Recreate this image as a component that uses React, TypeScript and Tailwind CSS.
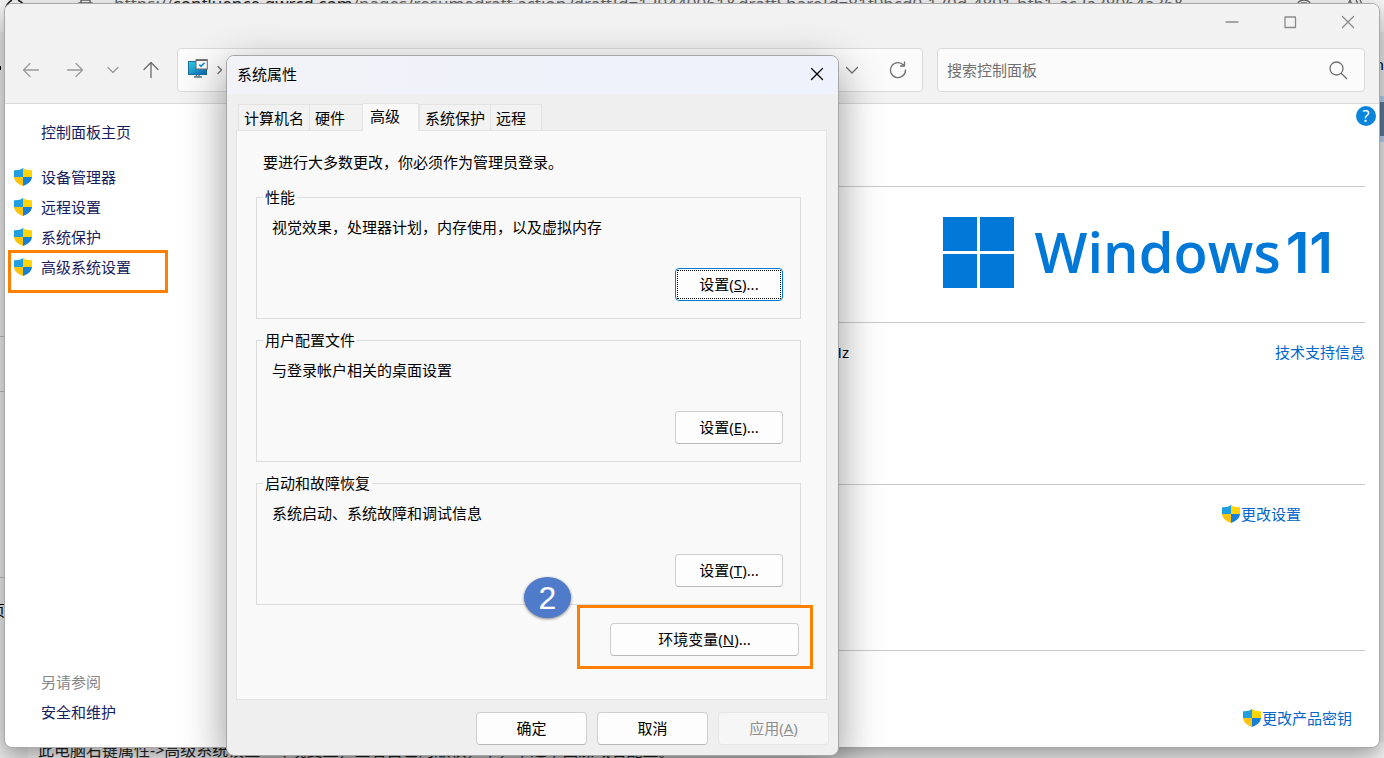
import { useId, type ReactNode } from 'react'
import clsx from 'clsx'

const sideLinks = [
  { t: '设备管理器' },
  { t: '远程设置' },
  { t: '系统保护' },
  { t: '高级系统设置', marked: true },
]

const tabs = [
  { t: '计算机名', w: 'w-[71px]' },
  { t: '硬件', w: 'w-[53px]' },
  { t: '高级', w: 'w-[57px]', active: true },
  { t: '系统保护', w: 'w-[71px]' },
  { t: '远程', w: 'w-[52px]' },
]

const groups = [
  { t: '性能', d: '视觉效果，处理器计划，内存使用，以及虚拟内存', k: 'S', focused: true },
  { t: '用户配置文件', d: '与登录帐户相关的桌面设置', k: 'E' },
  { t: '启动和故障恢复', d: '系统启动、系统故障和调试信息', k: 'T' },
]

function Shield() {
  const id = useId()
  return (
    <svg className="size-[18px] shrink-0" viewBox="0 0 18 18" aria-hidden="true">
      <clipPath id={id}>
        <path d="M9 0C11.2 1.7 14 2.4 18 2.2V8.6C18 13.4 13.6 16.6 9 18C4.4 16.6 0 13.4 0 8.6V2.2C4 2.4 6.8 1.7 9 0Z" />
      </clipPath>
      <g clipPath={`url(#${id})`}>
        <rect width="9" height="9" fill="#1f9fe0" />
        <rect x="9" width="9" height="9" fill="#ffd400" />
        <rect y="9" width="9" height="9" fill="#fcc30d" />
        <rect x="9" y="9" width="9" height="9" fill="#1580d6" />
      </g>
    </svg>
  )
}

function Glyph({ d, size = 'size-4', box = 16 }: { d: string; size?: string; box?: number }) {
  return (
    <svg className={size} viewBox={`0 0 ${box} ${box}`} fill="none" stroke="currentColor" strokeWidth="1.3"
      strokeLinecap="round" strokeLinejoin="round" aria-hidden="true">
      <path d={d} />
    </svg>
  )
}

function ComputerIcon() {
  return (
    <svg className="mb-1 h-[19px] w-5 shrink-0" viewBox="0 0 20 19" aria-hidden="true">
      <defs>
        <linearGradient id="screen" x1="0" y1="0" x2="1" y2="1">
          <stop offset="0" stopColor="#2fd3e3" />
          <stop offset="1" stopColor="#0b62b8" />
        </linearGradient>
      </defs>
      <rect x="0.5" y="2.5" width="18" height="13" fill="url(#screen)" stroke="#1a6f9c" />
      <path d="M8.5 16v1.5M11 16v1.5M6 18h8" stroke="#5b7688" strokeWidth="1.4" />
      <rect x="8" y="0.7" width="11.3" height="9.3" fill="#fff" stroke="#6a6a6a" />
      <path d="M8 1.2h11.3" stroke="#6a6a6a" strokeWidth="1.4" />
      <path d="M11.3 5.6l1.8 1.8 3.4-3.7" stroke="#1687e0" strokeWidth="1.6" fill="none" />
    </svg>
  )
}

function PushButton({ children, className, focused, disabled }: {
  children: ReactNode; className?: string; focused?: boolean; disabled?: boolean
}) {
  return (
    <button type="button" disabled={disabled}
      className={clsx('h-[33px] rounded border p-px text-center',
        focused ? 'border-[#0078d4] bg-[#fdfdfd]'
          : disabled ? 'border-[#e6e6e6] bg-[#f6f6f6] text-[#8f8f8f]'
          : 'border-[#cfcfcf] border-b-[#b9b9b9] bg-[#fdfdfd]',
        className)}>
      <span className={clsx('flex h-full items-center justify-center border pb-0.5', focused ? 'border-dotted border-black' : 'border-transparent')}>
        <span>{children}</span>
      </span>
    </button>
  )
}

function Backdrop() {
  return (
    <div className="absolute inset-0 overflow-hidden bg-[#ededed]" aria-hidden="true">
      <div className="absolute inset-x-0 top-0 h-8 bg-[#f7f7f7]" />
      <svg className="absolute left-1 top-0 h-6 w-7" viewBox="0 0 28 24" fill="none" stroke="#222" strokeWidth="1.6">
        <path d="M2 8Q3 3 8 0M14 0Q18 2 20 5" />
      </svg>
      <svg className="absolute left-[78px] top-0 h-6 w-4" viewBox="0 0 16 24" fill="none" stroke="#666" strokeWidth="1.4">
        <path d="M3 4V0h9v4M1 14V3h13v11" />
      </svg>
      <p className="absolute left-[114px] -top-2 whitespace-nowrap text-[17px] leading-6 text-[#666]">
        https://<span className="text-[#222]">confluence.gwrcd.com</span>/pages/resumedraft.action?draftId=129449061&amp;draftShareId=81f9bcd0-170d-4891-bfb1-ac2a38064a36&amp;
      </p>
      <svg className="absolute right-[70px] top-0 h-5 w-5" viewBox="0 0 20 20" fill="none" stroke="#666" strokeWidth="1.3">
        <circle cx="10" cy="8" r="8" />
        <path d="M7 3h6" />
      </svg>
      <svg className="absolute right-[18px] top-0 h-5 w-6" viewBox="0 0 24 20" fill="none" stroke="#666" strokeWidth="1.3">
        <path d="M3 12L8 0l5 12M14 0q3 4 2 10M18 0q3 5 2 10" />
      </svg>
      <div className="absolute left-0 top-[66px] h-1 w-px bg-black" />
      <div className="absolute right-0 top-[54px] text-[15px] leading-5 text-black">n</div>
      <div className="absolute right-0 top-24 h-[46px] w-3 border-y-[6px] border-[#b8d2ef] bg-[#5f7a99]" />
      <div className="absolute left-0 top-[336px] h-14 w-5 border-y border-[#bbb]" />
      <div className="absolute left-0 top-[577px] h-px w-5 bg-[#bbb]" />
      <div className="absolute -left-2.5 top-[600px] text-[15px] leading-5 text-black">页</div>
      <div className="absolute bottom-0 left-7 right-0 h-4 bg-[#f7f7f7]" />
      <p className="absolute -bottom-0.5 left-[38px] whitespace-nowrap text-base leading-5 text-[#222]">
        此电脑右键属性-&gt;高级系统设置-&gt;环境变量，查看自己的版权，下，下边下面加域名配置。
      </p>
    </div>
  )
}

function ControlPanel() {
  return (
    <section className="relative flex grow flex-col overflow-hidden rounded-lg border border-[#a9a9a9] bg-white shadow-[0_8px_24px_rgba(0,0,0,0.4)]">
      <header className="border-b border-[#d9d9d9] bg-[#f2f2f2] pb-[11px]">
        <div className="flex h-9 justify-end pr-0.5 text-[#8a8a8a]">
          <button type="button" aria-label="最小化" className="flex w-[58px] items-center justify-center"><Glyph d="M2 8h12" /></button>
          <button type="button" aria-label="最大化" className="flex w-[58px] items-center justify-center"><Glyph d="M3 3h10.5v10.5H3z" /></button>
          <button type="button" aria-label="关闭" className="flex w-[58px] items-center justify-center"><Glyph d="M2.5 2.5l11 11M13.5 2.5l-11 11" /></button>
        </div>
        <div className="mt-2 flex h-11 items-center gap-2 pl-2 pr-3.5 text-[#9b9b9b]">
          <button type="button" aria-label="后退" className="flex w-9 justify-center"><Glyph size="size-[18px]" box={18} d="M16.5 9H1.5M8 2.5L1.5 9 8 15.5" /></button>
          <button type="button" aria-label="前进" className="flex w-9 justify-center"><Glyph size="size-[18px]" box={18} d="M1.5 9h15M10 2.5L16.5 9 10 15.5" /></button>
          <button type="button" aria-label="最近位置" className="flex w-6 justify-center"><Glyph d="M3 5.5l5 5 5-5" /></button>
          <button type="button" aria-label="上移" className="flex w-9 justify-center text-[#6b6b6b]"><Glyph size="size-[18px]" box={18} d="M9 16.5v-15M2 8.5l7-7 7 7" /></button>
          <div className="flex h-full flex-1 items-center rounded border border-[#dadada] bg-[#fbfbfb] pl-2.5 pr-1.5 text-[#707070]">
            <ComputerIcon />
            <span className="ml-1 mr-auto"><Glyph d="M6 4.5l3.5 3.5L6 11.5" /></span>
            <button type="button" aria-label="展开地址" className="mr-2.5 flex w-9 justify-center"><Glyph d="M2.5 5.5L8 11l5.5-5.5" /></button>
            <button type="button" aria-label="刷新" className="flex w-9 justify-center">
              <Glyph size="size-[18px]" box={18} d="M14.5 4A7.5 7.5 0 1 0 16.5 9M15.5 1v4H11.5" />
            </button>
          </div>
          <label className="ml-1.5 flex h-full w-[428px] items-center rounded border border-[#dadada] bg-[#fbfbfb] pl-[9px] pr-4 text-[#707070]">
            <input type="text" aria-label="搜索控制面板" placeholder="搜索控制面板" className="min-w-0 flex-1 bg-transparent outline-none placeholder:text-[#707070]" />
            <Glyph size="size-5" box={20} d="M8.5 2a6.5 6.5 0 1 0 0 13a6.5 6.5 0 1 0 0-13M13.2 13.2l5.3 5.3" />
          </label>
        </div>
      </header>

      <div className="flex grow">
        <nav className="flex w-60 shrink-0 flex-col pb-5 pl-[9px] pt-[13px] leading-[30px] text-[#16205c]">
          <a href="#home" className="mb-[15px] ml-[27px]">控制面板主页</a>
          {sideLinks.map(l => (
            <a key={l.t} href="#link" className="relative flex items-center gap-[9px]">
              <Shield />
              {l.t}
              {l.marked && <span className="absolute -left-1.5 -top-0.5 h-[43px] w-40 border-3 border-[#ff8000]" />}
            </a>
          ))}
          <span className="ml-[27px] mt-auto text-[#868686]">另请参阅</span>
          <a href="#security" className="ml-[27px]">安全和维护</a>
        </nav>

        <main className="relative flex grow flex-col pr-3.5 text-[#0066cc]">
          <button type="button" aria-label="帮助" className="absolute right-[3px] top-0.5 size-5 rounded-full bg-[#0b84dc] text-base leading-5 text-white">?</button>
          <div className="h-[83px] border-b border-[#cbcbcb]" />
          <div className="flex items-center justify-end gap-[21px] border-b border-[#cbcbcb] pb-[33px] pr-8 pt-[29px]">
            <svg className="size-[71px]" viewBox="0 0 71 71" fill="#0078d7" aria-hidden="true">
              <path d="M0 0h34v34H0zM37 0h34v34H37zM0 37h34v34H0zM37 37h34v34H37z" />
            </svg>
            <div className="flex items-baseline gap-[5px] text-[56px] font-semibold leading-[71px] text-[#0078d7]">
              <span className="font-['Open_Sans']">Windows</span>
              <span className="font-['Inter']">11</span>
            </div>
          </div>
          <div className="flex min-h-[162px] items-start justify-between border-b border-[#cbcbcb] pt-[19px] leading-5">
            <span className="w-[604px] text-right text-black">GHz</span>
            <a href="#support">技术支持信息</a>
          </div>
          <div className="flex min-h-[166px] items-start justify-end border-b border-[#cbcbcb] pr-16 pt-[19px] leading-5">
            <a href="#rename" className="flex items-center gap-px"><Shield />更改设置</a>
          </div>
          <div className="flex grow items-end justify-end pb-[19px] pr-[13px] leading-5">
            <a href="#key" className="flex items-center gap-px"><Shield />更改产品密钥</a>
          </div>
        </main>
      </div>
    </section>
  )
}

function PropertiesDialog() {
  return (
    <section role="dialog" aria-label="系统属性"
      className="absolute left-[226px] top-[55px] w-[613px] overflow-hidden rounded-lg border border-[#a6a6a6] bg-[#efefef] shadow-[0_14px_44px_rgba(0,0,0,0.42)]">
      <div className="flex h-[38px] items-center justify-between bg-linear-to-r from-[#f2f3f8] to-[#eef2fc] pb-0.5 pl-2.5 pr-[13px]">
        <h2>系统属性</h2>
        <button type="button" aria-label="关闭"><Glyph d="M2.5 2.5l11 11M13.5 2.5l-11 11" /></button>
      </div>

      <div className="pl-[9px] pr-[11px] pt-[9px]">
        <div role="tablist" className="relative z-10 -mb-px flex items-end pl-0.5">
          {tabs.map(tab => (
            <button key={tab.t} type="button" role="tab" aria-selected={!!tab.active}
              className={clsx('border border-[#e3e3e3] text-left', tab.w,
                tab.active ? 'h-7 border-b-0 bg-[#f9f9f9] pb-1 pl-[7px]' : 'h-[27px] border-r-0 bg-[#f2f2f2] pl-[5px] last:border-r')}>
              {tab.t}
            </button>
          ))}
        </div>
        <div role="tabpanel" className="border border-[#e3e3e3] bg-[#f9f9f9] pb-[43px] pl-[19px] pr-[25px] pt-[21px] leading-5">
          <p className="mb-[15px] pl-[7px]">要进行大多数更改，你必须作为管理员登录。</p>
          <div className="flex flex-col gap-[11px]">
            {groups.map(g => (
              <fieldset key={g.t} className="border border-[#dcdcdc] pb-[17px] pl-[15px] pr-[17px]">
                <legend className="-ml-[9px] px-0.5">{g.t}</legend>
                <p className="pt-2.5">{g.d}</p>
                <div className="mt-[31px] flex justify-end">
                  <PushButton className="w-[108px]" focused={g.focused}>设置(<u>{g.k}</u>)...</PushButton>
                </div>
              </fieldset>
            ))}
          </div>
          <div className="mt-[18px] flex justify-end pr-0.5">
            <div className="relative flex">
              <PushButton className="w-[189px]">环境变量(<u>N</u>)...</PushButton>
              <span className="pointer-events-none absolute -bottom-[13px] -left-[33px] -right-3.5 -top-[18px] border-3 border-[#ff8000]" />
              <span className="absolute -left-[86px] -top-[46px] flex h-[41px] w-[47px] items-center justify-center rounded-[50%] bg-[#4f7bca] font-['Liberation_Sans'] text-[32px] text-white shadow-[0_1px_3px_rgba(0,0,0,0.5)]">2</span>
            </div>
          </div>
        </div>
      </div>

      <div className="flex justify-end gap-2.5 pb-2.5 pl-2 pr-[9px] pt-3">
        <PushButton className="w-[111px]">确定</PushButton>
        <PushButton className="w-[111px]">取消</PushButton>
        <PushButton className="w-[111px]" disabled>应用(<u>A</u>)</PushButton>
      </div>
    </section>
  )
}

export default function App() {
  return (
    <div className="relative flex min-h-screen flex-col overflow-hidden px-1 pb-2.5 pt-[3px] font-['Noto_Sans','Noto_Sans_CJK_SC',sans-serif] text-[15px] leading-5 text-black">
      <Backdrop />
      <ControlPanel />
      <PropertiesDialog />
    </div>
  )
}
